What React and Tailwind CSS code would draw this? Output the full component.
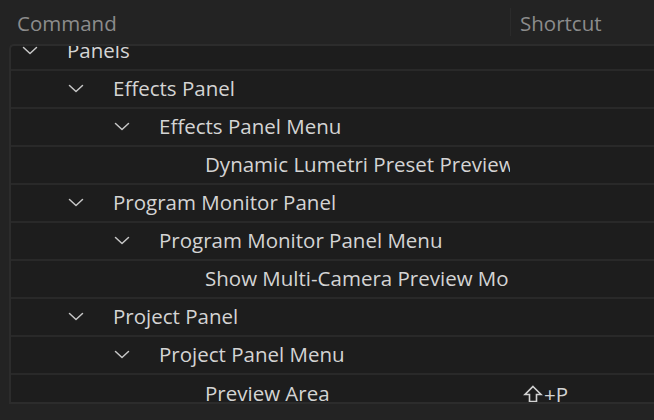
import React from "react";

const rows = [
  { level: 0, label: "Panels", chevron: true },
  { level: 1, label: "Effects Panel", chevron: true },
  { level: 2, label: "Effects Panel Menu", chevron: true },
  { level: 3, label: "Dynamic Lumetri Preset Preview" },
  { level: 1, label: "Program Monitor Panel", chevron: true },
  { level: 2, label: "Program Monitor Panel Menu", chevron: true },
  { level: 3, label: "Show Multi-Camera Preview Monitor" },
  { level: 1, label: "Project Panel", chevron: true },
  { level: 2, label: "Project Panel Menu", chevron: true },
  { level: 3, label: "Preview Area", shortcut: true },
];

const indent = ["pl-[11px]", "pl-[57px]", "pl-[103px]", "pl-[149px]"];

function Chevron() {
  return (
    <svg width="16" height="9" viewBox="0 0 16 9" className="shrink-0">
      <path d="M1.5 1.5 L8 7.5 L14.5 1.5" fill="none" stroke="#c6c6c6" strokeWidth="1.5" strokeLinecap="round" strokeLinejoin="round" />
    </svg>
  );
}

function ShiftP() {
  return (
    <span className="flex items-center gap-[1px] text-[#d2d2d2]">
      <svg width="20" height="20" viewBox="0 0 20 20">
        <path d="M10 2.5 L18 10.5 L13.5 10.5 L13.5 17.5 L6.5 17.5 L6.5 10.5 L2 10.5 Z" fill="none" stroke="#d2d2d2" strokeWidth="1.6" strokeLinejoin="miter" />
      </svg>
      <span>+P</span>
    </span>
  );
}

export default function App() {
  return (
    <div className="w-[654px] h-[420px] bg-[#232323] overflow-hidden flex flex-col" style={{ fontFamily: '"Open Sans", "Liberation Sans", sans-serif' }}>
      <div className="h-[44px] flex items-center shrink-0 text-[20.5px] text-[#8c8c8c]">
        <div className="w-[510px] pl-[17px] pt-[2px]">Command</div>
        <div className="w-px h-[28px] bg-[#2b2b2b]" />
        <div className="pl-[9px] pt-[2px]">Shortcut</div>
      </div>
      <div className="ml-[9px] h-[360px] border-l-2 border-t-2 border-b-2 border-[#2c2c2c] rounded-tl-[5px] bg-[#1d1d1d] overflow-hidden flex flex-col">
        <div className="flex flex-col -mt-[13px]">
          {rows.map((r, i) => (
            <div key={i} className="h-[38px] shrink-0 flex items-center border-b-2 border-[#292929] last:border-b-0 text-[20.5px] text-[#d4d4d4]">
              <div className={"w-[499px] flex items-center overflow-hidden whitespace-nowrap pb-[1px] " + indent[r.level]}>
                {r.chevron ? <span className="w-[45px] shrink-0 flex"><Chevron /></span> : null}
                <span className={r.chevron ? "" : "pl-[45px]"}>{r.label}</span>
              </div>
              <div className="pl-[13px]">{r.shortcut ? <ShiftP /> : null}</div>
            </div>
          ))}
        </div>
      </div>
    </div>
  );
}
